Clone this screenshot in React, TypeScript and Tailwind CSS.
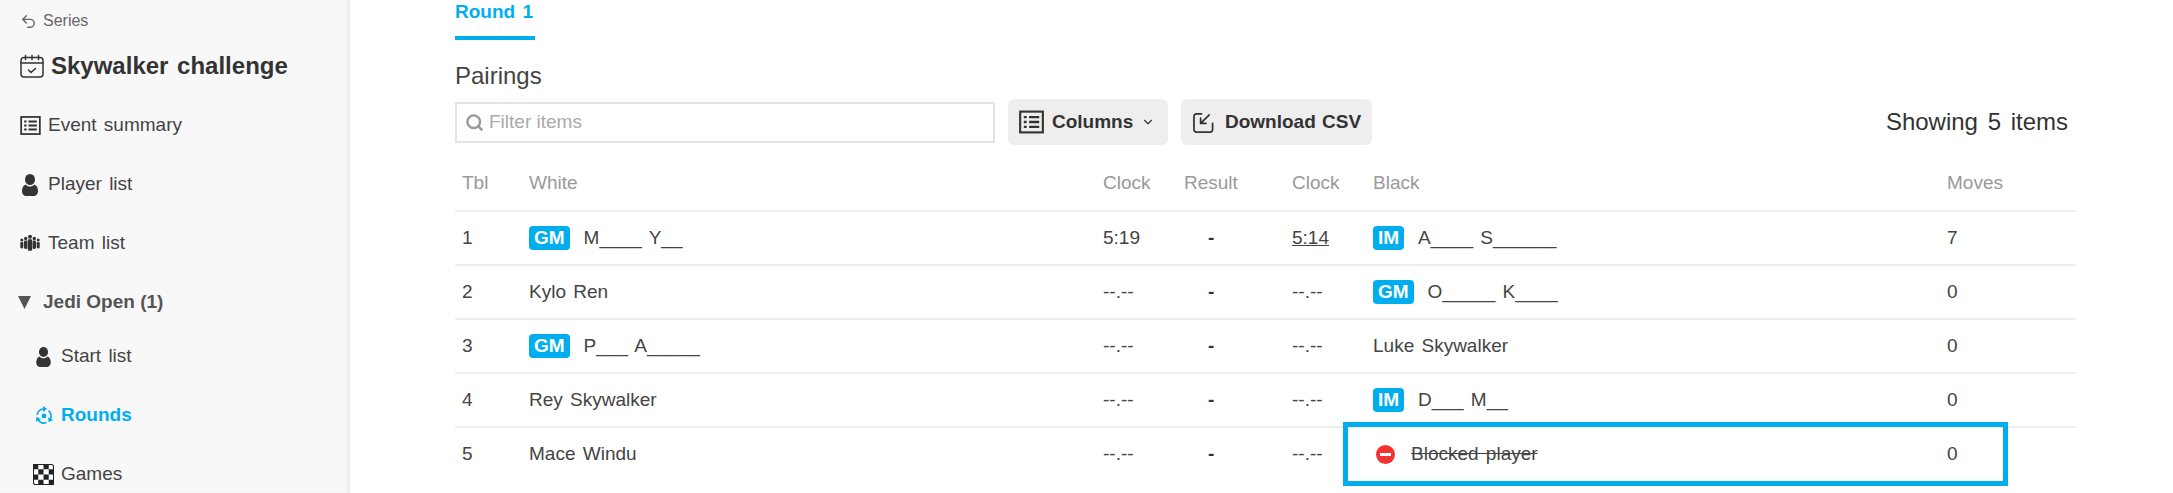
import { ChevronDown, Search, Undo2 } from "lucide-react";

const sans = "font-['Liberation_Sans',Arial,sans-serif]";

function PersonIcon({ className }: { className: string }) {
	return (
		<svg viewBox="0 0 16 22" className={className} fill="currentColor">
			<ellipse cx="8" cy="5.500" rx="5" ry="5.500" />
			<path d="M3.500 10.500C1.500 11.500 0 13.500 0 17c0 3 2 5 4.500 5h7C14 22 16 20 16 17c0-3.500-1.500-5.500-3.500-6.500C11 12 9.500 12.500 8 12.500S5 12 3.500 10.500z" />
		</svg>
	);
}

function TeamIcon({ className }: { className: string }) {
	const people = [
		{ x: 1.800, top: 5, r: 1.500, w: 3, h: 8 },
		{ x: 5.700, top: 3.500, r: 1.700, w: 3.400, h: 10 },
		{ x: 10, top: 1.800, r: 2, w: 4.400, h: 13.500 },
		{ x: 14.300, top: 3.500, r: 1.700, w: 3.400, h: 10 },
		{ x: 18.200, top: 5, r: 1.500, w: 3, h: 8 },
	];
	return (
		<svg viewBox="0 0 20 18" className={className} fill="currentColor">
			{people.map((p) => (
				<g key={p.x}>
					<circle cx={p.x} cy={p.top} r={p.r} />
					<rect x={p.x - p.w / 2} y={p.top + p.r + 0.400} width={p.w} height={p.h - p.r} rx="1.300" />
				</g>
			))}
		</svg>
	);
}

function ListBoxIcon({ className }: { className: string }) {
	return (
		<svg viewBox="0 0 26 24" className={className} fill="none" stroke="currentColor" strokeWidth="2.200">
			<rect x="1.200" y="1.200" width="23.600" height="21.600" />
			<path d="M5 7h3M5 12h3M5 17h3M10.500 7h10.500M10.500 12h10.500M10.500 17h10.500" strokeWidth="2.400" />
		</svg>
	);
}

function DownloadBoxIcon({ className }: { className: string }) {
	return (
		<svg viewBox="0 0 22 22" className={className} fill="none" stroke="currentColor" strokeWidth="1.800" strokeLinecap="round" strokeLinejoin="round">
			<path d="M9 2H3.500A2.500 2.500 0 0 0 1 4.500v14A2.500 2.500 0 0 0 3.500 21h14.500a2.500 2.500 0 0 0 2.500-2.500V12" />
			<path d="M17 3L8 12M8 6.500V12h5.500" />
		</svg>
	);
}

function RoundsIcon({ className }: { className: string }) {
	return (
		<svg viewBox="-1 -1 20 20" className={className} fill="none" stroke="currentColor" strokeWidth="1.600">
			<circle cx="9" cy="9" r="2.400" fill="currentColor" stroke="none" />
			{[0, 120, 240].map((angle) => (
				<g key={angle} transform={`rotate(${angle} 9 9)`}>
					<path d="M2.100 7.800A7 7 0 0 1 8.400 2" />
					<path d="M8 -1L12 2L8 5z" fill="currentColor" stroke="none" />
				</g>
			))}
		</svg>
	);
}

function CheckerIcon({ className }: { className: string }) {
	const cells: [number, number][] = [];
	for (let row = 0; row < 4; row++) {
		for (let col = 0; col < 4; col++) {
			if ((row + col) % 2 === 0) cells.push([col, row]);
		}
	}
	return (
		<svg viewBox="0 0 20 20" className={className}>
			<rect x="0.500" y="0.500" width="19" height="19" rx="2" fill="#fff" stroke="currentColor" />
			{cells.map(([c, r]) => (
				<rect key={`${c}-${r}`} x={c * 5} y={r * 5} width="5" height="5" fill="currentColor" />
			))}
		</svg>
	);
}

function CalendarCheckIcon() {
	return (
		<svg viewBox="0 0 24 24" className="w-6 h-6 mr-[7px]" fill="none" stroke="#333" strokeWidth="1.500" strokeLinecap="round" strokeLinejoin="round">
			<rect x="1" y="3.500" width="22" height="19.500" rx="3" />
			<path d="M1 9h22M5.500 1.500v4M12 1.500v4M18.500 1.500v4M8.500 16l2.500 2.500 4.500-4" />
		</svg>
	);
}

function NavRow({
	icon,
	label,
	indent,
	active,
}: {
	icon: React.ReactNode;
	label: string;
	indent?: boolean;
	active?: boolean;
}) {
	return (
		<div
			className={`flex h-[59px] items-center text-[19px] ${indent ? "pl-[33px]" : "pl-5"} ${
				active ? "font-bold text-[#00aeef]" : "text-[#444]"
			}`}
		>
			<span className="flex w-7 shrink-0">{icon}</span>
			<span>{label}</span>
		</div>
	);
}

function Sidebar() {
	return (
		<aside className="w-[350px] h-[493px] shrink-0 overflow-hidden bg-[#f8f8f8] shadow-[inset_-4px_0_4px_-2px_rgba(0,0,0,0.07)] [word-spacing:2px]">
			<div className="flex items-center pl-5 pt-[11px] text-[16px] leading-5 text-[#666]">
				<Undo2 className="w-[17px] h-[17px] mr-[6px]" strokeWidth={2} />
				Series
			</div>
			<div className="flex items-center pl-5 mt-[22px] h-[26px] text-[24px] font-bold text-[#333]">
				<CalendarCheckIcon />
				Skywalker challenge
			</div>
			<div className="mt-[17px]">
				<NavRow icon={<ListBoxIcon className="w-[21px] h-[19px] text-[#333]" />} label="Event summary" />
				<NavRow icon={<PersonIcon className="ml-[2px] w-4 h-[22px] text-[#333]" />} label="Player list" />
				<NavRow icon={<TeamIcon className="w-5 h-[18px] text-[#333]" />} label="Team list" />
				<div className="flex h-[59px] items-center pl-[18px] text-[19px] font-bold text-[#555] [word-spacing:0]">
					<span className="w-[25px] shrink-0">
						<svg viewBox="0 0 13 13" className="w-[13px] h-[13px]" fill="currentColor">
							<path d="M0 0h13L6.500 13z" />
						</svg>
					</span>
					Jedi Open (1)
				</div>
				<div className="-mt-[5px]">
					<NavRow indent icon={<PersonIcon className="ml-[3px] w-[15px] h-5 text-[#333]" />} label="Start list" />
					<NavRow
						indent
						active
						icon={<RoundsIcon className="ml-[1px] w-5 h-5 text-[#00aeef]" />}
						label="Rounds"
					/>
					<NavRow indent icon={<CheckerIcon className="w-[21px] h-[21px] text-[#222]" />} label="Games" />
				</div>
			</div>
		</aside>
	);
}

function Badge({ title }: { title: string }) {
	return (
		<span className="inline-flex h-6 items-center rounded-[4px] bg-[#00aeef] px-[5px] text-[19px] font-bold text-white mr-[14px]">
			{title}
		</span>
	);
}

const rows = [
	{ table: 1, title: "GM", white: "M____ Y__", clockW: "5:19", clockB: "5:14", blackTitle: "IM", black: "A____ S______", moves: 7 },
	{ table: 2, white: "Kylo Ren", clockW: "--.--", clockB: "--.--", blackTitle: "GM", black: "O_____ K____", moves: 0 },
	{ table: 3, title: "GM", white: "P___ A_____", clockW: "--.--", clockB: "--.--", black: "Luke Skywalker", moves: 0 },
	{ table: 4, white: "Rey Skywalker", clockW: "--.--", clockB: "--.--", blackTitle: "IM", black: "D___ M__", moves: 0 },
	{ table: 5, white: "Mace Windu", clockW: "--.--", clockB: "--.--", blocked: true, black: "Blocked player", moves: 0 },
];

function Pairings() {
	return (
		<div className="relative mt-3 w-[1621px]">
			<table className="w-full table-fixed border-collapse text-[19px] text-[#444]">
				<colgroup>
					<col className="w-[67px]" />
					<col className="w-[574px]" />
					<col className="w-[81px]" />
					<col className="w-[108px]" />
					<col className="w-[81px]" />
					<col className="w-[574px]" />
					<col className="w-[136px]" />
				</colgroup>
				<thead>
					<tr className="h-[54px] border-b-2 border-[#eee] text-left text-[#999]">
						<th className="px-[7px] font-normal">Tbl</th>
						<th className="px-[7px] font-normal">White</th>
						<th className="px-[7px] font-normal">Clock</th>
						<th className="px-[7px] font-normal">Result</th>
						<th className="px-[7px] font-normal">Clock</th>
						<th className="px-[7px] font-normal">Black</th>
						<th className="px-[7px] font-normal">Moves</th>
					</tr>
				</thead>
				<tbody>
					{rows.map((row) => (
						<tr key={row.table} className="h-[54px] border-b-2 border-[#eee] last:border-b-0">
							<td className="px-[7px]">{row.table}</td>
							<td className="px-[7px]">
								<span className="flex items-center">
									{row.title && <Badge title={row.title} />}
									{row.white}
								</span>
							</td>
							<td className="px-[7px]">{row.clockW}</td>
							<td className="pl-[31px] font-bold text-[#333]">-</td>
							<td className="px-[7px]">
								{row.table === 1 ? <span className="underline">{row.clockB}</span> : row.clockB}
							</td>
							<td className="px-[7px]">
								{row.blocked ? (
									<span className="flex items-center line-through">
										<span className="relative mr-[16px] ml-[3px] h-[19px] w-[19px] rounded-full bg-[#f33333]">
											<span className="absolute left-[4px] top-[8px] h-[3px] w-[11px] bg-white" />
										</span>
										{row.black}
									</span>
								) : (
									<span className="flex items-center">
										{row.blackTitle && <Badge title={row.blackTitle} />}
										{row.black}
									</span>
								)}
							</td>
							<td className="px-[7px]">{row.moves}</td>
						</tr>
					))}
				</tbody>
			</table>
			{/* highlight drawn over the blocked player cell */}
			<div className="absolute left-[888px] top-[265px] h-[64px] w-[665px] border-[5px] border-[#00aeef]" />
		</div>
	);
}

export default function App() {
	return (
		<div className={`flex h-[493px] w-[2173px] overflow-hidden bg-white ${sans}`}>
			<Sidebar />
			<main className="min-w-0 flex-1 pl-[105px] [word-spacing:2px]">
				<div className="inline-block h-10 border-b-4 border-[#00aeef] pr-[2px] text-[19px] font-bold leading-6 text-[#00aeef]">
					Round 1
				</div>
				<h2 className="mt-[22px] text-[24px] leading-7 text-[#444]">Pairings</h2>
				<div className="mt-[9px] flex w-[1613px] items-center">
					<div className="flex h-[41px] w-[540px] items-center border-2 border-[#e4e4e4] pl-2 text-[19px] text-[#aaa] [word-spacing:0]">
						<Search className="mr-[5px] w-[19px] h-[19px] text-[#999]" strokeWidth={3} />
						Filter items
					</div>
					<button className="ml-[13px] flex h-[46px] w-[160px] items-center rounded-md bg-[#eee] pl-[11px] text-[19px] font-bold text-[#333]">
						<ListBoxIcon className="mr-[8px] w-[25px] h-[24px]" />
						Columns
						<ChevronDown className="ml-[8px] w-[14px] h-[14px]" />
					</button>
					<button className="ml-[13px] flex h-[46px] w-[191px] items-center rounded-md bg-[#eee] pl-3 text-[19px] font-bold text-[#333] [word-spacing:1px]">
						<DownloadBoxIcon className="mr-[11px] w-[21px] h-[21px]" />
						Download CSV
					</button>
					<span className="ml-auto text-[24px] text-[#333] [word-spacing:3px]">Showing 5 items</span>
				</div>
				<Pairings />
			</main>
		</div>
	);
}
